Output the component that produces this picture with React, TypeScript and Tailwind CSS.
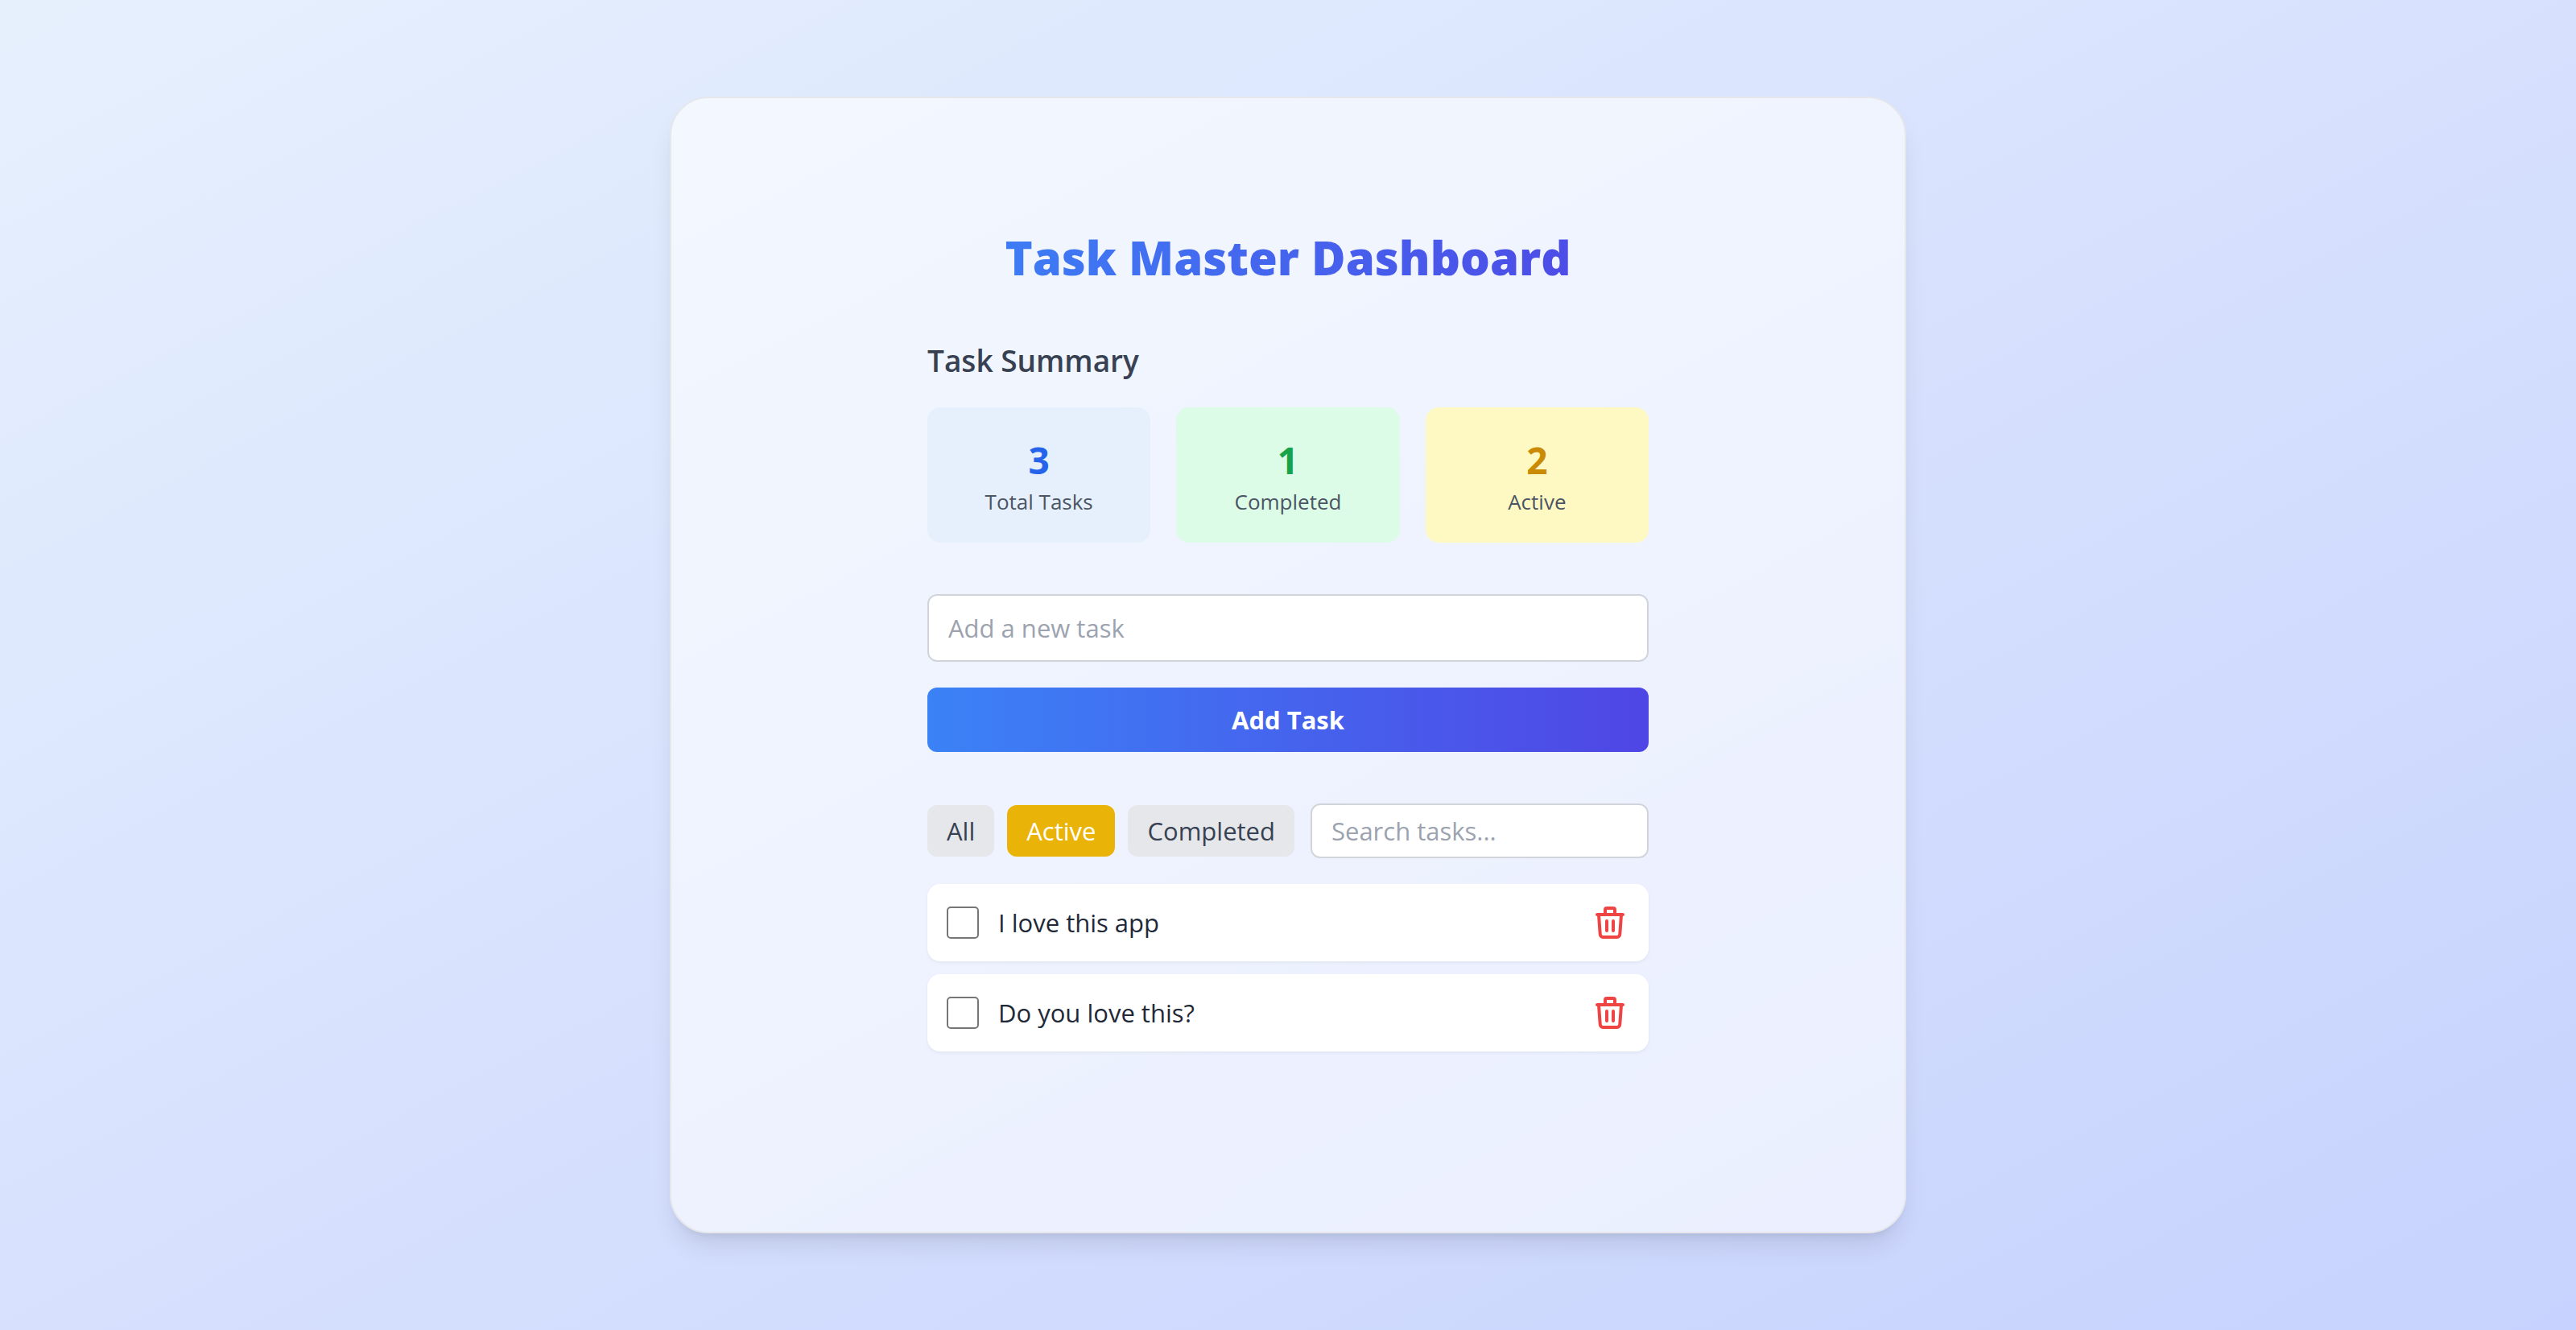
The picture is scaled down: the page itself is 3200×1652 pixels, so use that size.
import { useState, type FormEvent } from "react";

type Filter = "All" | "Active" | "Completed";
type Task = { id: number; text: string; done: boolean };

const initialTasks: Task[] = [
  { id: 1, text: "I love this app", done: false },
  { id: 2, text: "Do you love this?", done: false },
  { id: 3, text: "Build a task app", done: true },
];

const filters: Filter[] = ["All", "Active", "Completed"];

function TrashIcon() {
  return (
    <svg className="size-12" viewBox="0 0 24 24" fill="none" stroke="currentColor" strokeWidth={2} strokeLinecap="round" strokeLinejoin="round" aria-hidden="true">
      <path d="M19 7l-.867 12.142A2 2 0 0116.138 21H7.862a2 2 0 01-1.995-1.858L5 7m5 4v6m4-6v6m1-10V4a1 1 0 00-1-1h-4a1 1 0 00-1 1v3M4 7h16" />
    </svg>
  );
}

function Stat({ value, label, box, color }: { value: number; label: string; box: string; color: string }) {
  return (
    <div className={`rounded-2xl p-8 text-center ${box}`}>
      <p className={`text-[46px] leading-[66px] font-bold ${color}`}>{value}</p>
      <p className="text-[26px] leading-[38px] text-[#4b5563]">{label}</p>
    </div>
  );
}

export default function App() {
  const [tasks, setTasks] = useState(initialTasks);
  const [filter, setFilter] = useState<Filter>("Active");
  const [draft, setDraft] = useState("");
  const [query, setQuery] = useState("");

  const completed = tasks.filter((t) => t.done).length;
  const visible = tasks.filter(
    (t) =>
      (filter === "All" || (filter === "Completed") === t.done) &&
      t.text.toLowerCase().includes(query.toLowerCase()),
  );

  const addTask = (e: FormEvent) => {
    e.preventDefault();
    if (!draft.trim()) return;
    setTasks([...tasks, { id: Date.now(), text: draft.trim(), done: false }]);
    setDraft("");
  };

  return (
    <div className="flex min-h-screen items-center justify-center bg-linear-to-br/srgb from-[#e6f0fd] to-[#c7d2fe] p-8 font-['Segoe_UI','Open_Sans',sans-serif] text-[31px] leading-[48px]">
      <main className="w-full max-w-[1536px] rounded-[48px] border-2 border-[#e5e7eb] bg-white/60 p-40 shadow-[0_20px_30px_-6px_rgb(0_0_0/0.1),0_8px_12px_-8px_rgb(0_0_0/0.1)]">
        <div className="mx-auto max-w-4xl">
          <h1 className="mb-15 bg-linear-to-r/srgb from-[#3b82f6] to-[#4f46e5] bg-clip-text text-center text-[58px] leading-[76px] font-extrabold text-transparent">
            Task Master Dashboard
          </h1>

          <section className="mb-16">
            <h2 className="mb-7 text-[37px] leading-[60px] font-semibold text-[#374151]">Task Summary</h2>
            <div className="grid grid-cols-3 gap-8">
              <Stat value={tasks.length} label="Total Tasks" box="bg-[#e6f0fd]" color="text-[#2563eb]" />
              <Stat value={completed} label="Completed" box="bg-[#dcfce7]" color="text-[#16a34a]" />
              <Stat value={tasks.length - completed} label="Active" box="bg-[#fef9c3]" color="text-[#ca8a04]" />
            </div>
          </section>

          <form className="mb-16 flex flex-col gap-8" onSubmit={addTask}>
            <input
              type="text"
              aria-label="New task"
              placeholder="Add a new task"
              value={draft}
              onChange={(e) => setDraft(e.target.value)}
              className="w-full rounded-xl border-2 border-[#d1d5db] bg-white px-6 py-4 text-[#1f2937] placeholder:text-[#9ca3af]"
            />
            <button type="submit" className="w-full rounded-xl bg-linear-to-r/srgb from-[#3b82f6] to-[#4f46e5] py-4 font-bold text-white">
              Add Task
            </button>
          </form>

          <div className="mb-8 flex items-center gap-5">
            <div className="flex gap-4">
              {filters.map((name) => (
                <button
                  key={name}
                  type="button"
                  aria-pressed={filter === name}
                  onClick={() => setFilter(name)}
                  className={`rounded-xl px-6 py-2 ${filter === name ? "bg-[#eab308] text-white" : "bg-[#e5e7eb] text-[#374151]"}`}
                >
                  {name}
                </button>
              ))}
            </div>
            <input
              type="text"
              aria-label="Search tasks"
              placeholder="Search tasks..."
              value={query}
              onChange={(e) => setQuery(e.target.value)}
              className="min-w-0 flex-1 rounded-xl border-2 border-[#d1d5db] bg-white px-6 py-2 text-[#1f2937] placeholder:text-[#9ca3af]"
            />
          </div>

          <ul className="mb-16 flex flex-col gap-4">
            {visible.map((task) => (
              <li key={task.id} className="flex items-center justify-between rounded-2xl bg-white p-6 shadow-[0_2px_4px_0_rgb(0_0_0/0.05)]">
                <label className="flex items-center gap-6 text-[#1f2937]">
                  <input
                    type="checkbox"
                    checked={task.done}
                    onChange={() => setTasks(tasks.map((t) => (t.id === task.id ? { ...t, done: !t.done } : t)))}
                    className="size-10 appearance-none rounded-[5px] border-2 border-[#767676] bg-white checked:border-[#2563eb] checked:bg-[#2563eb]"
                  />
                  <span>{task.text}</span>
                </label>
                <button
                  type="button"
                  aria-label={`Delete ${task.text}`}
                  onClick={() => setTasks(tasks.filter((t) => t.id !== task.id))}
                  className="text-[#ef4444]"
                >
                  <TrashIcon />
                </button>
              </li>
            ))}
          </ul>
        </div>
      </main>
    </div>
  );
}
